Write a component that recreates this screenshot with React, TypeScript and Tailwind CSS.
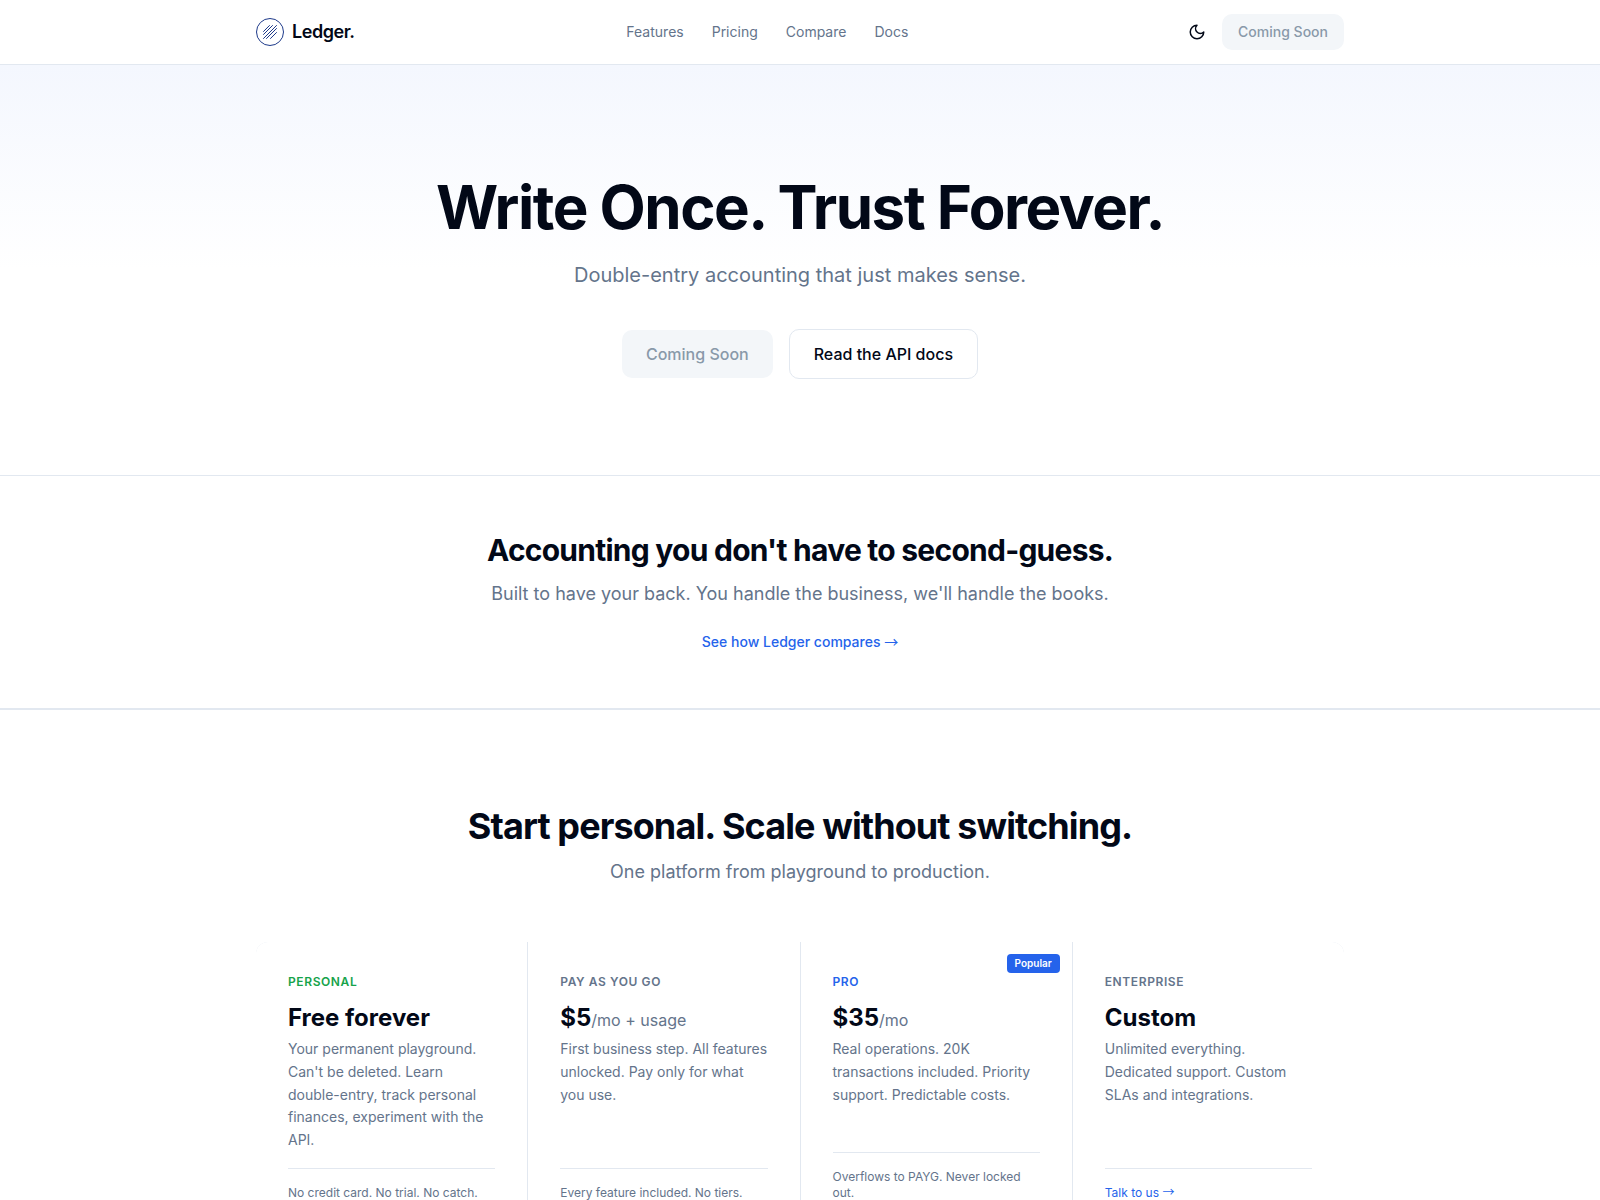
import { useState } from "react";

type Plan = {
    name: string;
    nameColor: string;
    price: string;
    unit?: string;
    description: string;
    note: string;
    noteHref?: string;
    popular?: boolean;
};

const navLinks = ["Features", "Pricing", "Compare", "Docs"];

const plans: Plan[] = [
    {
        name: "Personal",
        nameColor: "text-[#16a34a]",
        price: "Free forever",
        description:
            "Your permanent playground. Can't be deleted. Learn double-entry, track personal finances, experiment with the API.",
        note: "No credit card. No trial. No catch.",
    },
    {
        name: "Pay as you go",
        nameColor: "text-[#64748b]",
        price: "$5",
        unit: "/mo + usage",
        description: "First business step. All features unlocked. Pay only for what you use.",
        note: "Every feature included. No tiers.",
    },
    {
        name: "Pro",
        nameColor: "text-[#2563eb]",
        price: "$35",
        unit: "/mo",
        description: "Real operations. 20K transactions included. Priority support. Predictable costs.",
        note: "Overflows to PAYG. Never locked out.",
        popular: true,
    },
    {
        name: "Enterprise",
        nameColor: "text-[#64748b]",
        price: "Custom",
        description: "Unlimited everything. Dedicated support. Custom SLAs and integrations.",
        note: "Talk to us",
        noteHref: "#contact",
    },
];

function Logo() {
    return (
        <svg viewBox="0 0 28 28" fill="none" stroke="#1e3a8a" className="h-7 w-7" aria-hidden="true">
            <circle cx="14" cy="14" r="13.5" />
            <path
                strokeLinecap="round"
                d="M7.5 13.5 13.5 7.5M7.5 16.5 16.5 7.5M7.5 20.5 20.5 7.5M10.5 20.5 20.5 10.5M14.5 20.5 20.5 14.5"
            />
        </svg>
    );
}

function MoonIcon() {
    return (
        <svg
            viewBox="0 0 24 24"
            fill="none"
            stroke="currentColor"
            strokeWidth="2"
            strokeLinecap="round"
            strokeLinejoin="round"
            className="h-[18px] w-[18px]"
            aria-hidden="true"
        >
            <path d="M12 3a6 6 0 0 0 9 9 9 9 0 1 1-9-9Z" />
        </svg>
    );
}

function Arrow() {
    return <span className="font-['Noto_Sans_CJK_JP',sans-serif] leading-none font-normal">→</span>;
}

function PlanCard({ plan }: { plan: Plan }) {
    return (
        <article className="relative flex flex-col bg-white p-8">
            {plan.popular && (
                <span className="absolute top-3 right-3 rounded bg-[#2563eb] px-2 py-0.5 text-[10px] leading-[15px] font-semibold text-white">
                    Popular
                </span>
            )}
            <h3 className={`mb-3 text-xs font-semibold uppercase tracking-wider ${plan.nameColor}`}>
                {plan.name}
            </h3>
            <p className="mb-1 text-2xl font-bold">
                {plan.price}
                {plan.unit && <span className="text-base font-normal text-[#64748b]">{plan.unit}</span>}
            </p>
            <p className="mb-4 text-sm leading-relaxed text-[#64748b]">{plan.description}</p>
            <div className="mt-auto border-t border-[#e2e8f0] pt-4 text-xs text-[#64748b]">
                {plan.noteHref ? (
                    <a href={plan.noteHref} className="block text-[#2563eb] hover:underline">
                        {plan.note} <Arrow />
                    </a>
                ) : (
                    <p>{plan.note}</p>
                )}
            </div>
        </article>
    );
}

export default function App() {
    const [dark, setDark] = useState(false);

    return (
        <div className="min-h-screen bg-white font-['Inter',sans-serif] text-[#020817]">
            <header className="border-b border-[#e2e8f0] bg-white">
                <div className="mx-auto flex h-16 max-w-6xl items-center justify-between px-8">
                    <a href="#top" className="flex items-center gap-2 text-lg font-semibold tracking-tight">
                        <Logo />
                        Ledger.
                    </a>
                    <nav className="flex items-center gap-7 text-sm text-[#64748b]">
                        {navLinks.map((label) => (
                            <a key={label} href={`#${label.toLowerCase()}`} className="hover:text-[#020817]">
                                {label}
                            </a>
                        ))}
                    </nav>
                    <div className="flex items-center gap-2">
                        <button
                            type="button"
                            aria-label="Toggle theme"
                            aria-pressed={dark}
                            onClick={() => setDark(!dark)}
                            className="rounded-lg p-2 hover:bg-[#f1f5f9]"
                        >
                            <MoonIcon />
                        </button>
                        <button
                            type="button"
                            disabled
                            className="h-9 rounded-[10px] bg-[#f3f6f9] px-4 text-sm font-medium text-[#8999a9]"
                        >
                            Coming Soon
                        </button>
                    </div>
                </div>
            </header>

            <main id="top">
                <section className="border-b border-[#e2e8f0] bg-linear-to-b from-[#f4f7fe] to-white to-50% px-8 pt-28 pb-24 text-center">
                    <h1 className="text-6xl font-bold tracking-tight">Write Once. Trust Forever.</h1>
                    <p className="mt-6 text-xl text-[#64748b]">
                        Double-entry accounting that just makes sense.
                    </p>
                    <div className="mt-10 flex items-center justify-center gap-4">
                        <button
                            type="button"
                            disabled
                            className="h-12 rounded-[10px] bg-[#f3f6f9] px-6 font-medium text-[#8999a9]"
                        >
                            Coming Soon
                        </button>
                        <a
                            href="#docs"
                            className="rounded-[10px] border border-[#e2e8f0] bg-white px-6 py-3 font-medium hover:bg-slate-50"
                        >
                            Read the API docs
                        </a>
                    </div>
                </section>

                <section id="compare" className="border-b border-[#e2e8f0] px-8 py-14 text-center">
                    <h2 className="text-3xl font-bold tracking-tight">Accounting you don't have to second-guess.</h2>
                    <p className="mt-3 text-lg text-[#64748b]">
                        Built to have your back. You handle the business, we'll handle the books.
                    </p>
                    <p className="mt-6 text-sm font-medium">
                        <a href="#compare" className="text-[#2563eb] hover:underline">
                            See how Ledger compares <Arrow />
                        </a>
                    </p>
                </section>

                <section id="pricing" className="border-t border-[#e2e8f0] py-24">
                    <div className="mx-auto max-w-6xl px-8">
                        <div className="mb-14 text-center">
                            <h2 className="text-4xl font-bold tracking-tight">
                                Start personal. Scale without switching.
                            </h2>
                            <p className="mt-3 text-lg text-[#64748b]">
                                One platform from playground to production.
                            </p>
                        </div>
                        <div className="grid grid-cols-4 gap-px overflow-hidden rounded-xl bg-[#e2e8f0]">
                            {plans.map((plan) => (
                                <PlanCard key={plan.name} plan={plan} />
                            ))}
                        </div>
                    </div>
                </section>
            </main>
        </div>
    );
}
